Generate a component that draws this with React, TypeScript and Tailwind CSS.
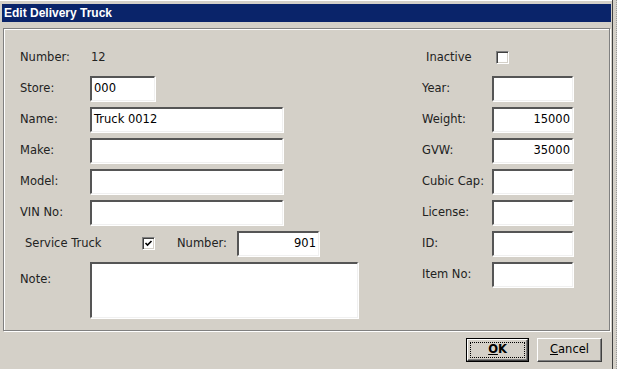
import React from 'react';

const font = { fontFamily: 'Tahoma, "DejaVu Sans", sans-serif' };

// classic sunken edit box
function Field({ w, value = '', right = false }: { w: string; value?: string; right?: boolean }) {
  return (
    <div
      className={`${w} h-[25px] bg-white border-t-2 border-l-2 border-t-[#555] border-l-[#555] border-b border-r border-b-[#f0f0f0] border-r-[#f0f0f0] shadow-[1px_1px_0_#fff] flex items-center px-[2px] text-black ${right ? 'justify-end' : ''}`}
    >
      {value}
    </div>
  );
}

function Check({ checked = false }: { checked?: boolean }) {
  return (
    <div className="w-[13px] h-[13px] bg-white border-t border-l border-t-[#808080] border-l-[#808080] border-b border-r border-b-white border-r-white shadow-[inset_1px_1px_0_#404040,inset_-1px_-1px_0_#d4d0c8] flex items-center justify-center">
      {checked && (
        <svg width="9" height="9" viewBox="0 0 9 9">
          <path d="M1.5 4 L3.5 6 L7.5 2" stroke="#000" strokeWidth="1.6" fill="none" />
        </svg>
      )}
    </div>
  );
}

function Row({ label, children }: { label: string; children: React.ReactNode }) {
  return (
    <div className="h-[25px] flex items-center">
      <div className="w-[70px]">{label}</div>
      {children}
    </div>
  );
}

export default function App() {
  return (
    <div className="w-[617px] h-[369px] bg-[#d4d0c8] flex overflow-hidden text-[11.5px] text-[#222]" style={font}>
      <div className="w-[612px] h-full flex flex-col pt-[3px] pl-[2px] border-t border-t-white">
        <div
          className="h-[18px] bg-[#0a246a] flex items-center pl-[2px] text-white font-bold text-[12px] mr-[1px]"
          style={{ fontFamily: '"Liberation Sans", Arial, sans-serif' }}
        >
          Edit Delivery Truck
        </div>

        <div className="mt-[6px] ml-[1px] mr-[2px] h-[303px] border border-[#808080] shadow-[inset_1px_1px_0_#fff,1px_1px_0_#fff] flex pt-[16px] pl-[16px]">
          <div className="w-[402px] flex flex-col gap-[6px]">
            <Row label="Number:">
              <span className="pl-[1px]">12</span>
            </Row>
            <Row label="Store:">
              <Field w="w-[65px]" value="000" />
            </Row>
            <Row label="Name:">
              <Field w="w-[193px]" value="Truck 0012" />
            </Row>
            <Row label="Make:">
              <Field w="w-[193px]" />
            </Row>
            <Row label="Model:">
              <Field w="w-[193px]" />
            </Row>
            <Row label="VIN No:">
              <Field w="w-[193px]" />
            </Row>
            <div className="h-[25px] flex items-center pl-[5px]">
              <div className="w-[117px]">Service Truck</div>
              <Check checked />
              <div className="w-[60px] ml-[22px]">Number:</div>
              <Field w="w-[82px]" value="901" right />
            </div>
            <div className="flex">
              <div className="w-[70px] pt-[9px]">Note:</div>
              <div className="w-[268px] h-[56px] bg-white border-t-2 border-l-2 border-t-[#555] border-l-[#555] border-b border-r border-b-[#f0f0f0] border-r-[#f0f0f0] shadow-[1px_1px_0_#fff]" />
            </div>
          </div>

          <div className="w-[152px] flex flex-col gap-[6px]">
            <div className="h-[25px] flex items-center pl-[4px]">
              <div className="w-[70px]">Inactive</div>
              <Check />
            </div>
            <Row label="Year:">
              <Field w="w-[81px]" />
            </Row>
            <Row label="Weight:">
              <Field w="w-[81px]" value="15000" right />
            </Row>
            <Row label="GVW:">
              <Field w="w-[81px]" value="35000" right />
            </Row>
            <Row label="Cubic Cap:">
              <Field w="w-[81px]" />
            </Row>
            <Row label="License:">
              <Field w="w-[81px]" />
            </Row>
            <Row label="ID:">
              <Field w="w-[81px]" />
            </Row>
            <Row label="Item No:">
              <Field w="w-[81px]" />
            </Row>
          </div>
        </div>

        <div className="flex justify-end gap-[8px] pr-[10px] pt-[7px]">
          <div className="w-[63px] h-[24px] border border-black">
            <div className="w-full h-full border-t border-l border-t-white border-l-white border-b border-r border-b-[#404040] border-r-[#404040] shadow-[inset_-1px_-1px_0_#808080] p-[2px]">
              <div className="w-full h-full border border-dotted border-black flex items-center justify-center font-bold text-black">
                <span><span className="underline">O</span>K</span>
              </div>
            </div>
          </div>
          <div className="w-[65px] h-[24px] border-t border-l border-t-white border-l-white border-b border-r border-b-[#404040] border-r-[#404040] shadow-[inset_-1px_-1px_0_#808080] flex items-center justify-center text-black">
            <span><span className="underline">C</span>ancel</span>
          </div>
        </div>
      </div>
      <div className="flex-1 border-l border-l-[#404040] flex">
        <div className="w-[2px] ml-[2px] border-r border-dotted border-[#9a9a9a]" />
      </div>
    </div>
  );
}
